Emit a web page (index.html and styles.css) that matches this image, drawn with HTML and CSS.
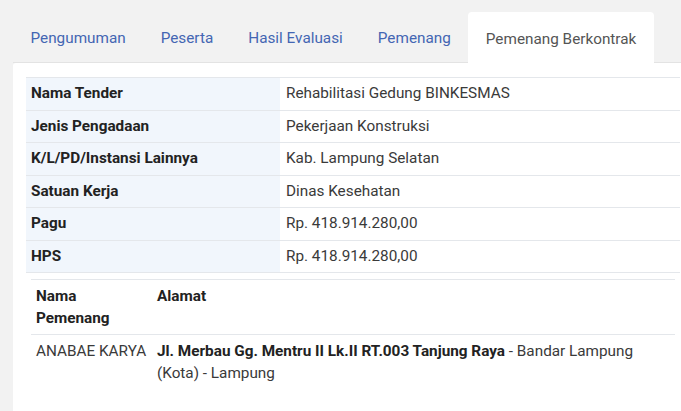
FILE: index.html
```html
<!DOCTYPE html>
<html lang="id">
<head>
<meta charset="utf-8">
<title>Pemenang Berkontrak</title>
<link rel="stylesheet" href="styles.css">
</head>
<body>
<div class="page">
  <ul class="tabs">
    <li class="tab"><a href="#">Pengumuman</a></li>
    <li class="tab"><a href="#">Peserta</a></li>
    <li class="tab"><a href="#">Hasil Evaluasi</a></li>
    <li class="tab"><a href="#">Pemenang</a></li>
    <li class="tab tab-active"><a href="#">Pemenang Berkontrak</a></li>
  </ul>
  <div class="panel">
    <table class="info">
      <tbody>
        <tr><th>Nama Tender</th><td>Rehabilitasi Gedung BINKESMAS</td></tr>
        <tr><th>Jenis Pengadaan</th><td>Pekerjaan Konstruksi</td></tr>
        <tr><th>K/L/PD/Instansi Lainnya</th><td>Kab. Lampung Selatan</td></tr>
        <tr><th>Satuan Kerja</th><td>Dinas Kesehatan</td></tr>
        <tr><th>Pagu</th><td>Rp. 418.914.280,00</td></tr>
        <tr><th>HPS</th><td>Rp. 418.914.280,00</td></tr>
      </tbody>
    </table>
    <table class="winners">
      <thead>
        <tr><th class="col-name">Nama Pemenang</th><th>Alamat</th></tr>
      </thead>
      <tbody>
        <tr>
          <td class="col-name">ANABAE KARYA</td>
          <td><b>Jl. Merbau Gg. Mentru II Lk.II RT.003 Tanjung Raya</b> - Bandar Lampung (Kota) - Lampung</td>
        </tr>
      </tbody>
    </table>
  </div>
</div>
</body>
</html>
```

FILE: styles.css
```css
html, body {
  margin: 0;
  padding: 0;
}
body {
  background: #f2f2f2;
  font-family: Roboto, "Liberation Sans", sans-serif;
  font-size: 15.3px;
  color: #333;
  overflow: hidden;
}
.page {
  width: 680px;
  padding: 12px 0 0 13px;
}
.tabs {
  list-style: none;
  margin: 0;
  padding: 0;
  display: flex;
  border-bottom: 1px solid #e3e3e3;
}
.tab {
  height: 50px;
  display: flex;
  align-items: center;
  padding: 0 17.5px;
  margin-bottom: -1px;
  border-radius: 4px 4px 0 0;
  white-space: nowrap;
}
.tab a {
  color: #4466b3;
  text-decoration: none;
  padding-top: 2px;
}
.tab-active {
  background: #fff;
  height: 51px;
}
.tab-active a {
  color: #555;
}
.panel {
  background: #fff;
  border-radius: 3px 0 0 0;
  padding: 14px 13px 40px;
  min-height: 300px;
}
.info {
  width: 100%;
  border-collapse: collapse;
}
.info th,
.info td {
  border-top: 1px solid #e4e7eb;
  padding: 5px 6px;
  line-height: 21.5px;
  text-align: left;
  white-space: nowrap;
}
.info tr:last-child th,
.info tr:last-child td {
  border-bottom: 1px solid #e4e7eb;
}
.info th {
  width: 243px;
  background: #f1f6fc;
  color: #222;
  font-weight: 700;
  padding-left: 5px;
}
.info td {
  color: #3a3a3a;
}
.winners {
  width: calc(100% - 10px);
  margin: 6px 5px 0;
  border-collapse: collapse;
}
.winners th,
.winners td {
  border-top: 1px solid #e4e7eb;
  padding: 5px;
  line-height: 22px;
  text-align: left;
  vertical-align: top;
}
.winners th {
  color: #222;
  font-weight: 700;
}
.winners td {
  color: #3a3a3a;
}
.winners td b {
  color: #222;
}
.col-name {
  width: 111px;
}
```
